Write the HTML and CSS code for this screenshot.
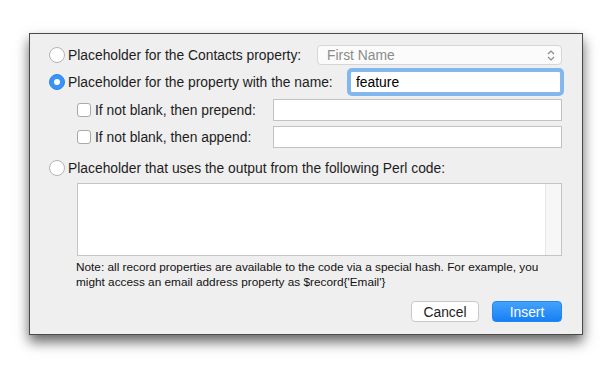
FILE: index.html
```html
<!DOCTYPE html>
<html lang="en">
<head>
  <meta charset="UTF-8" />
  <title>Insert Placeholder</title>
  <link rel="stylesheet" href="styles.css">
</head>
<body>
  <div class="dialog">
    <div class="row row-contacts">
      <span class="radio"></span>
      <span class="label">Placeholder for the Contacts property:</span>
      <div class="popup">
        <span>First Name</span>
        <svg class="chevrons" width="8" height="13" viewBox="0 0 8 13">
          <path d="M1 5 L4 2 L7 5" fill="none" stroke="#8a8a8a" stroke-width="1.2"/>
          <path d="M1 8 L4 11 L7 8" fill="none" stroke="#8a8a8a" stroke-width="1.2"/>
        </svg>
      </div>
    </div>
    <div class="row row-name">
      <span class="radio checked"></span>
      <span class="label">Placeholder for the property with the name:</span>
      <div class="field focused">feature</div>
    </div>
    <div class="row row-sub">
      <span class="check"></span>
      <span class="label">If not blank, then prepend:</span>
      <div class="field"></div>
    </div>
    <div class="row row-sub">
      <span class="check"></span>
      <span class="label">If not blank, then append:</span>
      <div class="field"></div>
    </div>
    <div class="row row-perl">
      <span class="radio"></span>
      <span class="label">Placeholder that uses the output from the following Perl code:</span>
    </div>
    <div class="code">
      <div class="code-area"></div>
      <div class="scroll-track"></div>
    </div>
    <p class="note">Note: all record properties are available to the code via a special hash. For example, you might access an email address property as $record{'Email'}</p>
    <div class="buttons">
      <button class="btn">Cancel</button>
      <button class="btn primary">Insert</button>
    </div>
  </div>
</body>
</html>
```

FILE: styles.css
```css
html, body {
  margin: 0;
  padding: 0;
  background: #fff;
  font-family: "Liberation Sans", Arial, sans-serif;
}

body {
  padding: 33px 0 0 29px;
  min-height: 367px;
  box-sizing: border-box;
}

.dialog {
  border: 1px solid #4a4a4a;
  background: #efefef;
  box-shadow: 0 7px 12px rgba(0, 0, 0, 0.6);
  padding: 11px 20px 0 19px;
  box-sizing: content-box;
  width: 513px;
  height: 289px;
  display: flex;
  flex-direction: column;
  color: #1d1d1d;
  font-size: 13.85px;
}

.row {
  display: flex;
  align-items: center;
}

.row-contacts {
  height: 20px;
}

.row-name {
  height: 24px;
  margin-top: 5px;
}

.row-sub {
  height: 22px;
  margin-top: 5px;
  padding-left: 28px;
}

.row-perl {
  height: 20px;
  margin-top: 10px;
}

.label {
  white-space: nowrap;
}

.radio {
  width: 14px;
  height: 14px;
  border: 1px solid #b4b4b4;
  border-radius: 50%;
  background: #fff;
  margin-right: 3px;
  flex-shrink: 0;
  display: flex;
  align-items: center;
  justify-content: center;
}

.radio.checked {
  border-color: #2b86f1;
  background: #3a93f6;
}

.radio.checked::after {
  content: "";
  width: 6px;
  height: 6px;
  border-radius: 50%;
  background: #fff;
}

.check {
  width: 12px;
  height: 12px;
  border: 1px solid #a9a9a9;
  border-radius: 3px;
  background: #fff;
  margin-right: 4px;
  flex-shrink: 0;
}

.popup {
  margin-left: auto;
  width: 245px;
  height: 20px;
  box-sizing: border-box;
  border: 1px solid #d6d6d6;
  border-radius: 4px;
  background: #fbfbfb;
  color: #8c8c8c;
  display: flex;
  align-items: center;
  justify-content: space-between;
  padding: 0 6px 0 9px;
}

.field {
  margin-left: auto;
  height: 22px;
  box-sizing: border-box;
  border: 1px solid #c2c2c2;
  background: #fff;
  display: flex;
  align-items: center;
  padding-left: 5px;
}

.row-name .field {
  width: 211px;
  margin-right: 1px;
}

.row-sub .field {
  width: 289px;
}

.field.focused {
  height: 22px;
  border-color: #8ab7e6;
  box-shadow: 0 0 0 3px #7fb7ee;
  border-radius: 2px;
  color: #000;
}

.code {
  margin-top: 5px;
  margin-left: 28px;
  height: 73px;
  border: 1px solid #c4c4c4;
  background: #fff;
  display: flex;
  box-sizing: border-box;
}

.code-area {
  flex: 1;
}

.scroll-track {
  width: 15px;
  background: #f7f7f7;
  border-left: 1px solid #e6e6e6;
}

.note {
  margin: 4px 0 0 27px;
  font-size: 11.8px;
  line-height: 15px;
  color: #111;
}

.buttons {
  margin-top: 11px;
  display: flex;
  justify-content: flex-end;
  gap: 13px;
}

.btn {
  height: 21px;
  box-sizing: border-box;
  border: 1px solid #c8c8c8;
  border-radius: 4px;
  background: #fff;
  font-family: "Liberation Sans", Arial, sans-serif;
  font-size: 13.85px;
  color: #1d1d1d;
  padding: 0;
  width: 68px;
}

.btn.primary {
  width: 70px;
  border-color: #1f86f3;
  background: linear-gradient(#45a2fb, #1680f5);
  color: #fff;
}
```
